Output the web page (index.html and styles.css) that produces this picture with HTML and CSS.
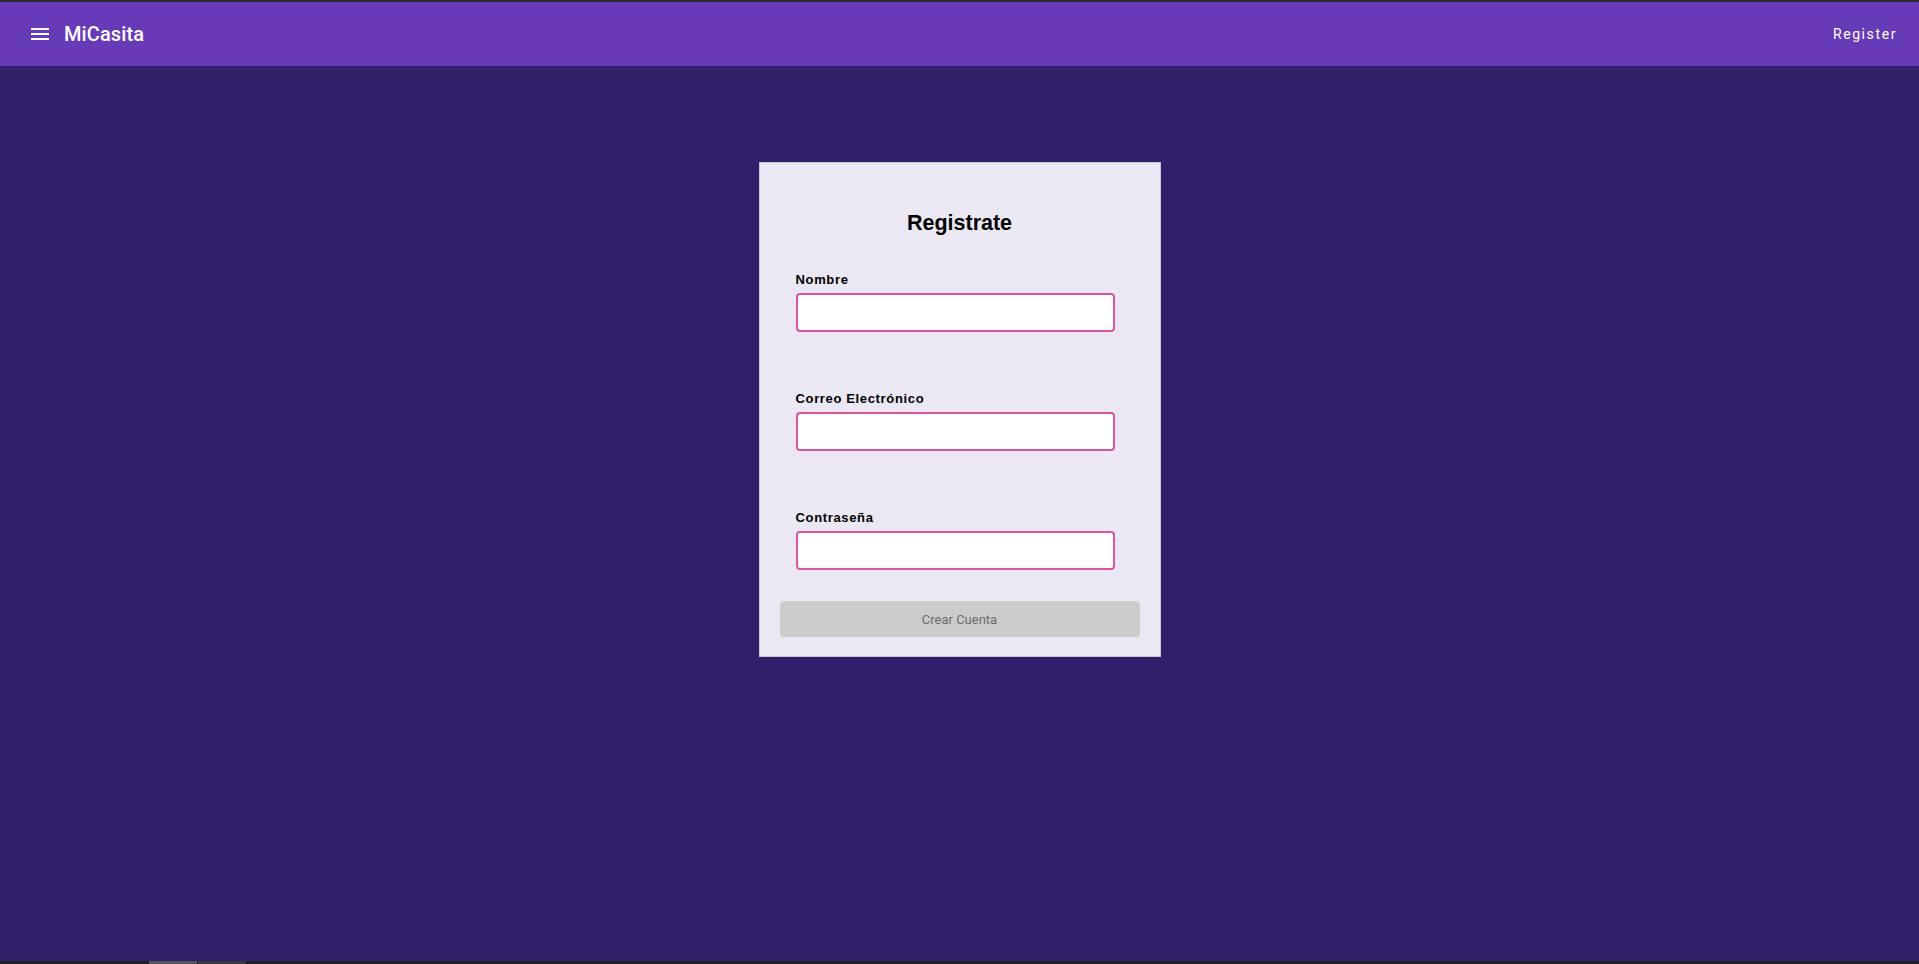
FILE: index.html
```html
<!DOCTYPE html>
<html lang="es">
<head>
<meta charset="utf-8">
<title>MiCasita</title>
<link rel="stylesheet" href="styles.css">
</head>
<body>
<div class="top-strip"></div>
<header class="toolbar">
  <button class="icon-btn" aria-label="menu">
    <svg width="24" height="24" viewBox="0 0 24 24"><path fill="#fff" d="M3 18h18v-2H3v2zm0-5h18v-2H3v2zm0-7v2h18V6H3z"/></svg>
  </button>
  <span class="brand">MiCasita</span>
  <span class="spacer"></span>
  <button class="text-btn">Register</button>
</header>
<main class="main">
  <form class="card">
    <h2 class="title">Registrate</h2>
    <div class="field">
      <label class="label">Nombre</label>
      <input class="input" type="text">
    </div>
    <div class="field">
      <label class="label">Correo Electrónico</label>
      <input class="input" type="email">
    </div>
    <div class="field last">
      <label class="label">Contraseña</label>
      <input class="input" type="password">
    </div>
    <button class="submit" type="button" disabled>Crear Cuenta</button>
  </form>
</main>
<div class="bottom-strip">
  <span class="seg seg1"></span><span class="seg seg2"></span>
</div>
</body>
</html>
```
FILE: styles.css
```css
html, body {
  margin: 0;
  padding: 0;
  height: 100%;
}
body {
  display: flex;
  flex-direction: column;
  overflow: hidden;
  background: #32206a;
  font-family: Roboto, "Liberation Sans", sans-serif;
}
.top-strip {
  height: 2px;
  flex: none;
  background: #2b2b2e;
}
.toolbar {
  flex: none;
  height: 64px;
  display: flex;
  align-items: center;
  padding: 0 16px 0 16px;
  background: #673ab7;
  color: #fff;
  box-sizing: border-box;
}
.icon-btn {
  width: 48px;
  height: 48px;
  padding: 0;
  border: 0;
  background: none;
  display: flex;
  align-items: center;
  justify-content: center;
}
.brand {
  font-family: Roboto, sans-serif;
  font-weight: 500;
  font-size: 20px;
  letter-spacing: 0.1px;
}
.spacer { flex: 1; }
.text-btn {
  border: 0;
  background: none;
  color: #fff;
  font-family: Roboto, sans-serif;
  font-weight: 400;
  font-size: 14px;
  letter-spacing: 1.6px;
  padding: 0 6px 0 8px;
  height: 36px;
}
.main {
  flex: 1;
  display: flex;
  justify-content: center;
  align-items: flex-start;
  padding-top: 96px;
}
.card {
  width: 402px;
  box-sizing: border-box;
  background: #ebe7f3;
  border: 1px solid #c9c7d0;
  padding: 20px 20px 19px;
  display: flex;
  flex-direction: column;
}
.title {
  margin: 28px 0 36px;
  font-family: "Liberation Sans", Arial, sans-serif;
  font-weight: bold;
  font-size: 21.5px;
  line-height: 25px;
  text-align: center;
  color: #000;
}
.field {
  display: flex;
  flex-direction: column;
  padding-left: 16px;
  margin-bottom: 59px;
}
.field.last { margin-bottom: 31px; }
.label {
  font-family: "Liberation Sans", Arial, sans-serif;
  font-weight: bold;
  font-size: 13px;
  line-height: 15px;
  letter-spacing: 0.65px;
  color: #000;
  margin-bottom: 6px;
}
.input {
  width: 319px;
  height: 39px;
  box-sizing: border-box;
  border: 2px solid #d9559f;
  border-radius: 4px;
  background: #fff;
  margin: 0;
  padding: 0 8px;
  outline: none;
}
.submit {
  height: 36px;
  border: 0;
  border-radius: 4px;
  background: #cccccc;
  color: #6b6b6b;
  font-family: Roboto, sans-serif;
  font-size: 13px;
  padding: 0;
}
.bottom-strip {
  flex: none;
  height: 3px;
  background: #1f1f1f;
  display: flex;
  padding-left: 149px;
}
.seg { height: 3px; }
.seg1 { width: 48px; background: #555; margin-right: 1px; }
.seg2 { width: 48px; background: #3a3a3a; }
```
